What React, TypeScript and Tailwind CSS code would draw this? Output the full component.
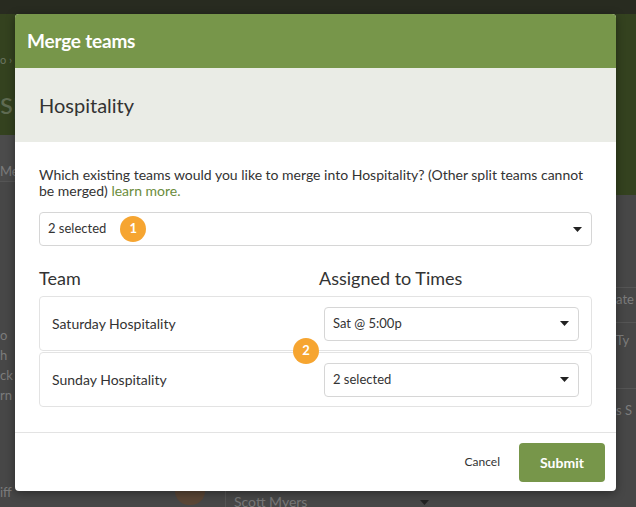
import { useState } from 'react';

const ROWS = [
  { team: 'Saturday Hospitality', times: 'Sat @ 5:00p' },
  { team: 'Sunday Hospitality', times: '2 selected' },
];

function Caret() {
  return (
    <svg width="9" height="5" viewBox="0 0 9 5" className="shrink-0">
      <path d="M0 0h9L4.5 5z" fill="#222" />
    </svg>
  );
}

function Badge({ n }: { n: number }) {
  return (
    <span className="flex h-[26px] w-[26px] items-center justify-center rounded-full bg-[#f6a531] text-[13px] font-bold text-white">
      {n}
    </span>
  );
}

function Select({ value, children }: { value: string; children?: React.ReactNode }) {
  return (
    <div className="flex h-[34px] items-center justify-between rounded-[4px] border border-[#d6d6d6] bg-white pl-2 pr-[9px] text-[13px] text-[#333]">
      <div className="flex items-center gap-[14px]">
        <span>{value}</span>
        {children}
      </div>
      <Caret />
    </div>
  );
}

export default function App() {
  const [selected] = useState('2 selected');

  return (
    <div className="relative h-[507px] w-[636px] overflow-hidden bg-[#474747] font-['Lato','Noto_Sans',sans-serif]">
      {/* Dimmed page behind the modal */}
      <div className="h-[14px] bg-[#282b20]" />
      <div className="flex h-[121px] bg-[#34421f]">
        <div className="flex w-[15px] flex-col overflow-hidden pt-[40px] text-[#6b7560]">
          <span className="text-[11px] leading-none">o ›</span>
          <span className="mt-[22px] text-[30px] leading-none text-[#5f6b52]">sp</span>
        </div>
      </div>
      <div className="flex justify-between">
        <div className="w-[15px] overflow-hidden text-[13px] leading-[20px] text-[#7c7c7c]">
          <div className="h-[47px] border-b border-[#555] bg-[#4b4b4b] pt-[26px]">Me</div>
          <div className="mt-[143px] leading-[20px]">
            <div>o h</div>
            <div>ck</div>
            <div>rn</div>
          </div>
          <div className="mt-[76px] leading-[22px]">
            <div>iff</div>
            <div>ne.</div>
          </div>
        </div>
        <div className="w-[20px] overflow-hidden text-[13px] text-[#7c7c7c]">
          <div className="h-[60px] bg-[#34421f]" />
          <div className="mt-[92px] border-t border-[#555] pt-[2px]">ate</div>
          <div className="mt-[12px] border-t border-[#555] pt-[8px]">Ty</div>
          <div className="mt-[38px] border-t border-[#555] pt-[12px]">s S</div>
        </div>
      </div>
      <div className="absolute left-[175px] top-[491px] flex h-[16px] items-start overflow-hidden">
        <div className="h-[14px] w-[30px] rounded-b-full bg-[#5a4636]" />
        <div className="ml-[20px] flex w-[210px] items-center justify-between border-l border-[#555] pl-[8px] pr-[6px] text-[14px] leading-[22px] text-[#777]">
          <span>Scott Myers</span>
          <svg width="9" height="5" viewBox="0 0 9 5">
            <path d="M0 0h9L4.5 5z" fill="#222" />
          </svg>
        </div>
      </div>

      {/* Modal */}
      <div className="absolute left-[15px] top-[14px] flex w-[601px] flex-col overflow-hidden rounded-[4px] bg-white shadow-[0_2px_10px_rgba(0,0,0,0.4)]">
        <div className="flex h-[54px] items-center bg-[#77964a] px-3">
          <h1 className="text-[19px] font-bold tracking-[-0.2px] text-white">Merge teams</h1>
        </div>
        <div className="flex h-[74px] items-center bg-[#eaece6] px-6">
          <h2 className="text-[20px] text-[#333]">Hospitality</h2>
        </div>

        <div className="px-6 pb-[25px] pt-[25px]">
          <p className="text-[14px] leading-[16px] text-[#333]">
            Which existing teams would you like to merge into Hospitality? (Other split teams cannot be merged){' '}
            <a className="text-[#6b8c3c]">learn more.</a>
          </p>

          <div className="mt-[13px]">
            <Select value={selected}>
              <Badge n={1} />
            </Select>
          </div>

          <div className="mt-[20px] flex text-[18px] leading-[24px] text-[#333]">
            <div className="w-[280px]">Team</div>
            <div>Assigned to Times</div>
          </div>

          <div className="relative mt-[6px] flex flex-col gap-[1px]">
            {ROWS.map(row => (
              <div
                key={row.team}
                className="flex h-[55px] items-center justify-between rounded-[4px] border border-[#e3e3e3] pl-3 pr-[12px] text-[14px] text-[#333]"
              >
                <span>{row.team}</span>
                <div className="w-[255px]">
                  <Select value={row.times} />
                </div>
              </div>
            ))}
            <div className="absolute left-[254px] top-[42px]">
              <Badge n={2} />
            </div>
          </div>
        </div>

        <div className="flex h-[59px] items-center justify-end gap-[19px] border-t border-[#e3e3e3] pr-[11px]">
          <button className="text-[12px] text-[#333]">Cancel</button>
          <button className="h-[39px] w-[86px] rounded-[4px] bg-[#77964a] text-[14px] font-bold text-white">
            Submit
          </button>
        </div>
      </div>
    </div>
  );
}
